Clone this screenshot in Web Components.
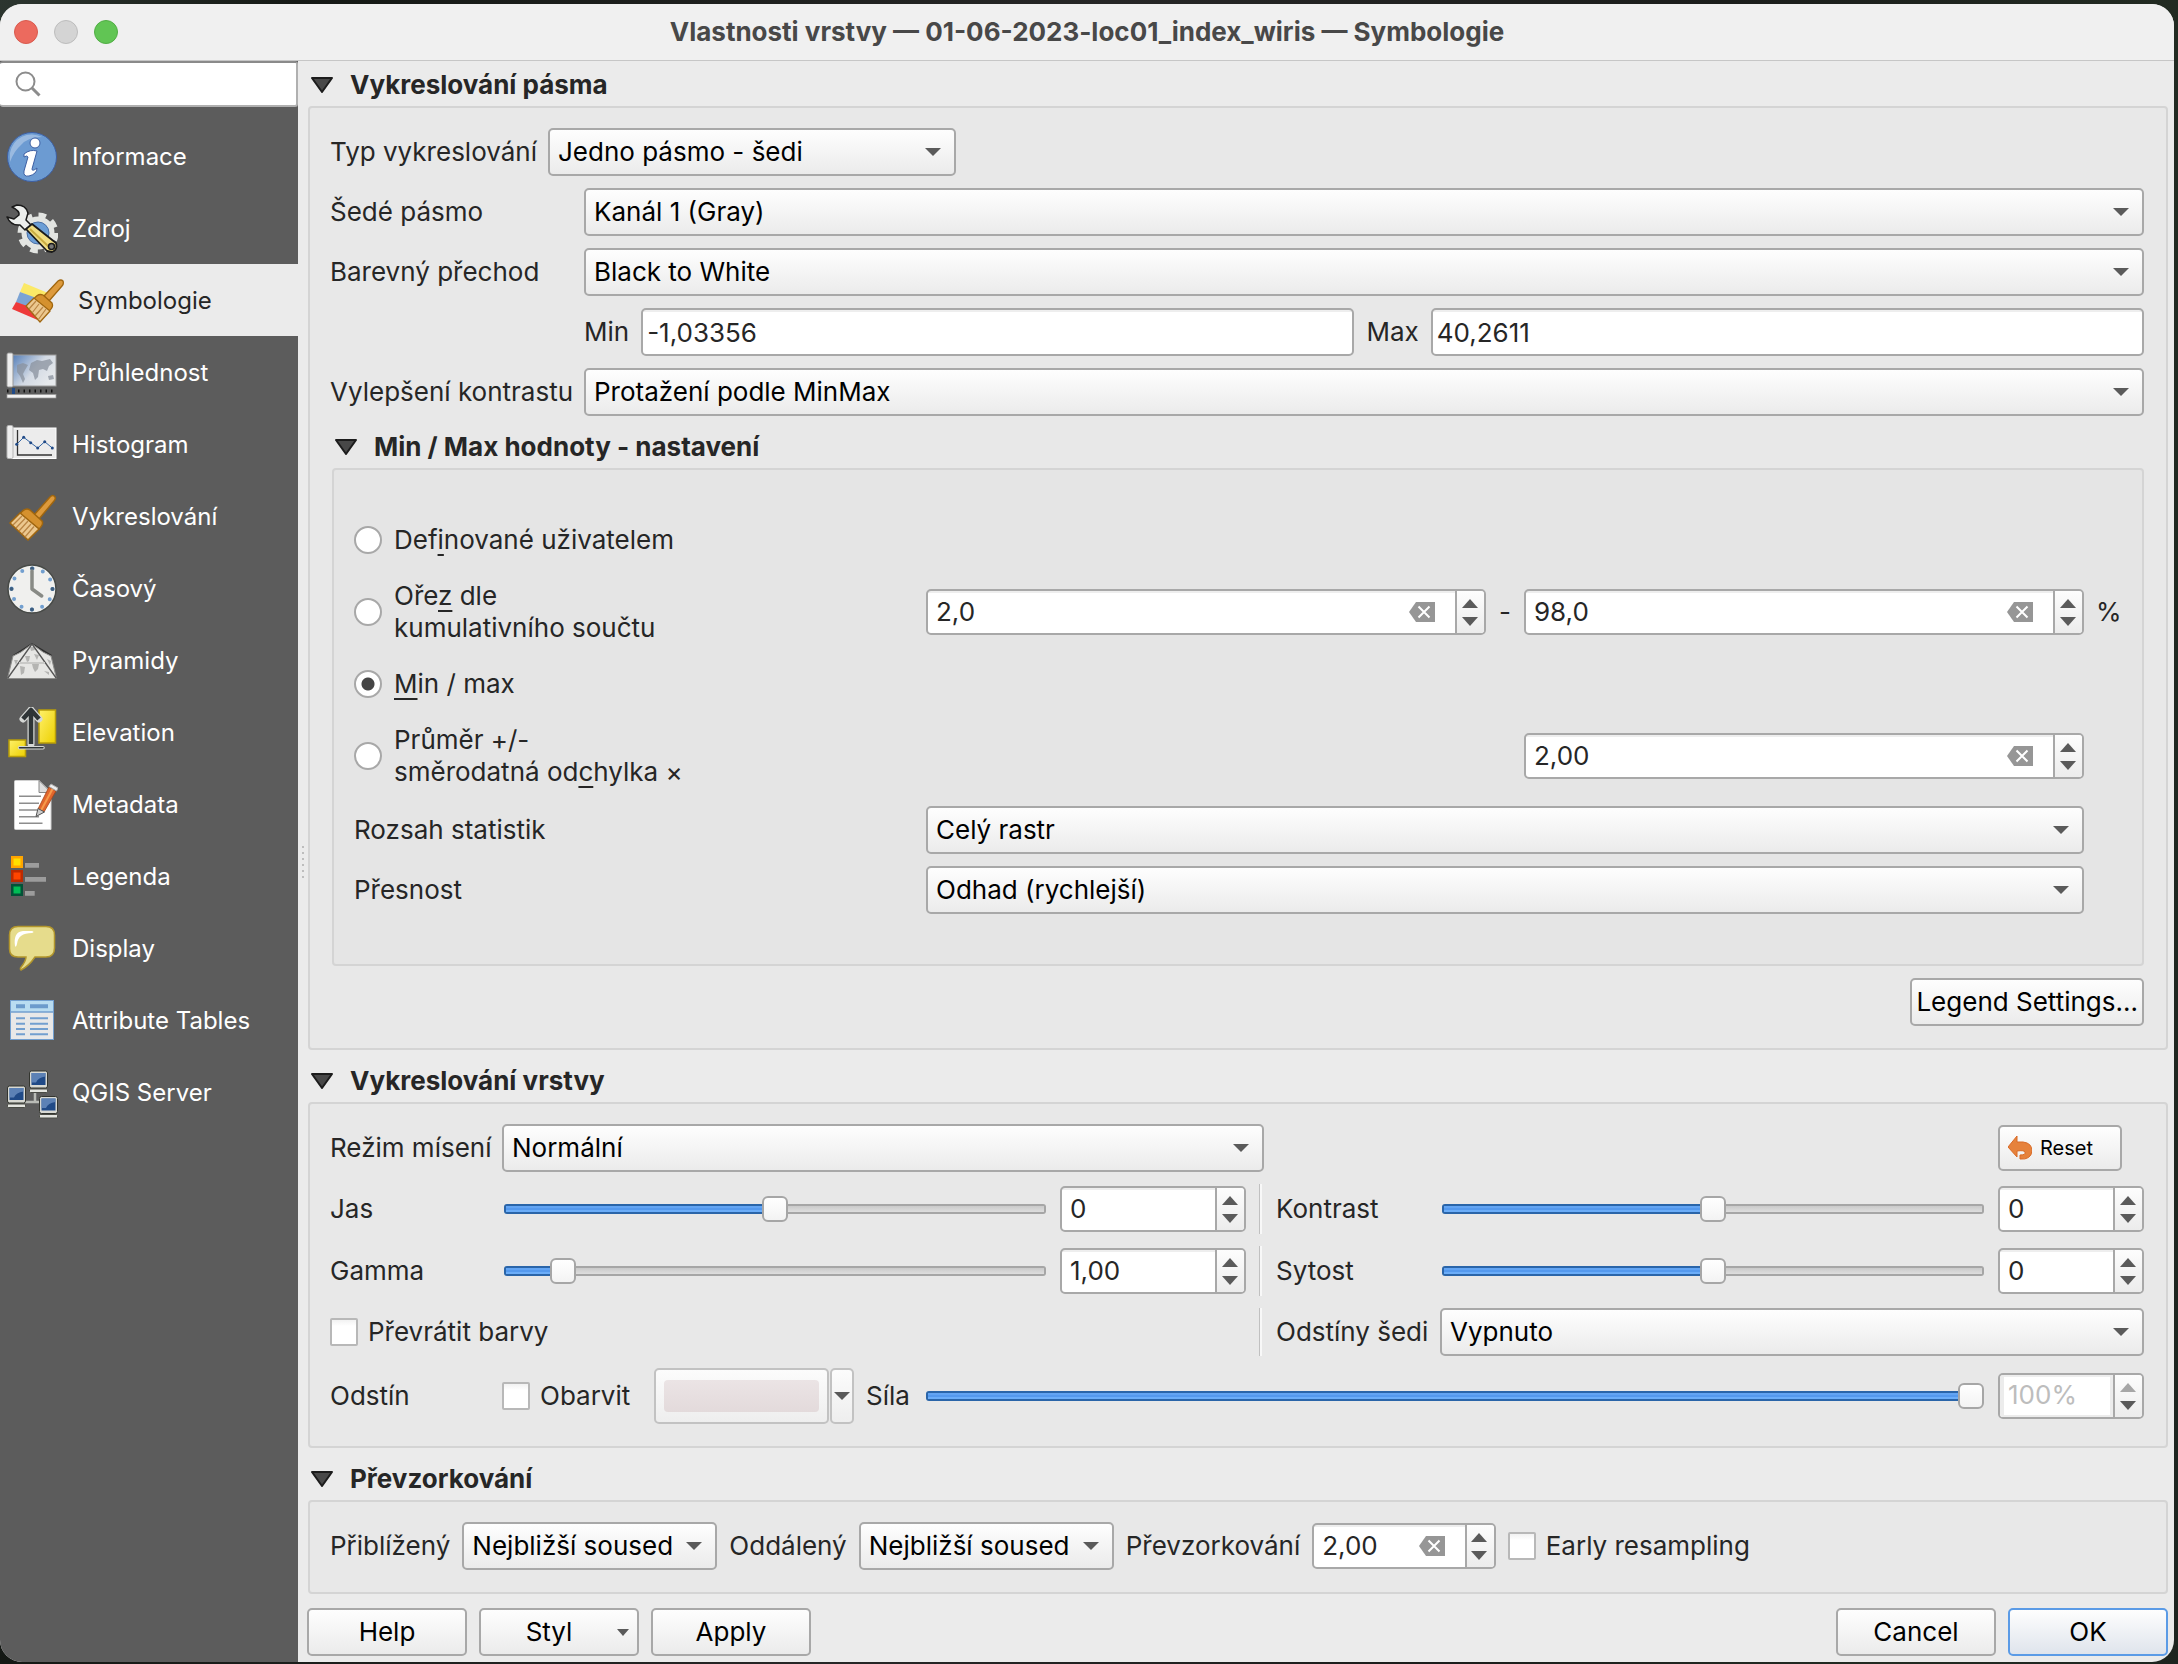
<!DOCTYPE html>
<html lang="cs">
<head>
<meta charset="utf-8">
<title>Vlastnosti vrstvy</title>
<style>
  body {
    margin: 0;
    min-height: 100vh;
    display: flex;
    background: linear-gradient(100deg, #2c352f, #151915 12%, #262626 45%, #1b1d1b 70%, #222b22 88%, #1d241f);
    font-family: Inter, "Liberation Sans", sans-serif;
    font-size: 26px;
    line-height: 32px;
    color: #262626;
  }
</style>
</head>
<body>
<layer-dialog></layer-dialog>

<script>
const base = `
  *, *::before, *::after { box-sizing: border-box; }
  input, select, button { font: inherit; color: inherit; margin: 0; }
  button, select {
    border: 2px solid #a8a8a8; border-radius: 5px;
    background: linear-gradient(#fefefe, #ebebeb); color: #000;
  }
  label, span { white-space: nowrap; }
`;

class Base extends HTMLElement {
  constructor() {
    super();
    this.attachShadow({ mode: "open" });
  }
  connectedCallback() {
    this.shadowRoot.innerHTML = `<style>${base}${this.css()}</style>${this.html()}`;
  }
  css() { return ""; }
  html() { return ""; }
  attr(name, fallback = "") { return this.getAttribute(name) ?? fallback; }
  labelHtml() {
    return this.hasAttribute("label") ? `<label for="c">${this.attr("label")}</label>` : "";
  }
  aria() {
    return this.hasAttribute("label") ? "" : `aria-label="${this.attr("name")}"`;
  }
}

const fieldCss = `
  :host { display: flex; align-items: center; min-width: 0; }
  label { flex: none; width: var(--label-width, auto); margin-right: var(--label-gap, 0px); }
`;

class UiSelect extends Base {
  css() {
    return `${fieldCss}
      .box { flex: 1; min-width: 0; display: grid; align-items: center; }
      select { grid-area: 1 / 1; width: 100%; height: 48px; padding: 0 42px 0 8px; appearance: none; }
      svg { grid-area: 1 / 1; justify-self: end; margin-right: 15px; pointer-events: none; }`;
  }
  html() {
    return `${this.labelHtml()}<div class="box">
      <select id="c" ${this.aria()}><option>${this.attr("value")}</option></select>
      <svg width="16" height="8"><path d="M0 0H16L8 8Z" fill="#5a5a5a"/></svg></div>`;
  }
}

class UiText extends Base {
  css() {
    return `${fieldCss}
      input { flex: 1 1 auto; min-width: 0; width: 200px; height: 48px; padding: 0 4px; border: 2px solid #a8a8a8;
        border-radius: 5px; background: linear-gradient(#eee 0 2px, #fff 2px); }`;
  }
  html() { return `${this.labelHtml()}<input id="c" value="${this.attr("value")}">`; }
}

const stepper = `
  <div class="steps">
    <button aria-label="Zvýšit"><svg width="16" height="9"><path d="M0 9H16L8 0Z" fill="currentColor"/></svg></button>
    <button aria-label="Snížit"><svg width="16" height="9"><path d="M0 0H16L8 9Z" fill="currentColor"/></svg></button>
  </div>`;
const spinCss = `
  .spin { display: flex; height: 46px; border: 2px solid #a8a8a8; border-radius: 5px;
    background: linear-gradient(#eee 0 2px, #fff 2px); overflow: hidden; min-width: 0; }
  .spin input { flex: 1; min-width: 0; width: 0; border: 0; padding: 0 8px; background: none; outline-offset: -2px; }
  .clear { flex: none; display: flex; align-items: center; padding: 0 20px 0 0; border: 0; background: none; }
  .steps { flex: none; width: 29px; display: flex; flex-direction: column; justify-content: center; gap: 9px; padding-right: 2px;
    border-left: 2px solid #a8a8a8; background: linear-gradient(#fdfdfd, #ececec); }
  .steps button { display: flex; justify-content: center; padding: 0; border: 0; background: none; color: #5a5a5a; }
  .dim input { color: #bdbdbd; border: solid #ececec; border-width: 0 3px 2px 4px; padding: 0 4px; }
  .dim .steps button:first-child { color: #a6a6a6; }
`;

class UiSpin extends Base {
  css() {
    return `${fieldCss}${spinCss}
      .spin { flex: 1; }`;
  }
  html() {
    const clear = this.hasAttribute("clearable") ? `<button class="clear" aria-label="Vymazat">
      <svg width="26" height="20"><path d="M0 10L7 0H26V20H7Z" fill="#969696"/><path d="M9.500 4.500L20.500 15.500M20.500 4.500L9.500 15.500" stroke="#fff" stroke-width="2"/></svg></button>` : "";
    return `${this.labelHtml()}<div class="spin">
      <input id="c" ${this.aria()} inputmode="decimal" value="${this.attr("value")}">${clear}${stepper}</div>`;
  }
}

class UiSlider extends Base {
  css() {
    return `${fieldCss}${spinCss}
      :host { gap: 14px; }
      .lead { flex: 1; display: flex; align-items: center; min-width: 0; }
      .spin { flex: none; width: var(--spin-width, 146px); }
      .range { flex: 1; min-width: 0; width: 0; height: 26px; appearance: none; background: none; }
      .range::-webkit-slider-runnable-track {
        height: 10px; border-radius: 3px;
        background:
          linear-gradient(#2a65a9, #2a65a9) left / 2px 100% no-repeat,
          linear-gradient(#2a65a9 0 2px, #62a4f3 2px 4px, #5499ee 4px 6px, #6badf8 6px 8px, #2a65a9 8px) left / var(--fill) 100% no-repeat,
          linear-gradient(#a6a6a6, #a6a6a6) right / 2px 100% no-repeat,
          linear-gradient(#a6a6a6 0 2px, #cacaca 2px, #dedede 8px, #a6a6a6 8px);
      }
      .range::-webkit-slider-thumb {
        appearance: none; width: 26px; height: 26px; margin-top: -8px;
        border: 2px solid #a6a6a6; border-radius: 6px; background: linear-gradient(#fff, #f3f3f3);
      }`;
  }
  html() {
    const pos = Number(this.attr("pos"));
    const fill = `calc(13px + (100% - 26px) * ${pos / 1000})`;
    return `<div class="lead">${this.labelHtml()}
      <input id="c" class="range" type="range" min="0" max="1000" value="${pos}" style="--fill: ${fill}"></div>
      <div class="spin ${this.hasAttribute("dim") ? "dim" : ""}">
        <input aria-label="${this.attr("label")} – hodnota" value="${this.attr("value")}">${stepper}</div>`;
  }
}

class UiCheck extends Base {
  css() {
    return `:host { display: flex; }
      label { display: flex; align-items: center; gap: 10px; }
      input { appearance: none; width: 28px; height: 28px; border: 2px solid #b8b8b8; border-radius: 2px;
        background: linear-gradient(#f2f2f2, #fff 6px); }`;
  }
  html() { return `<label><input type="checkbox"><span><slot></slot></span></label>`; }
}

class UiGroup extends Base {
  css() {
    return `:host { display: block; margin: 10px 0 0 1px; }
      h2 { margin: 0; font-size: inherit; height: 42px; }
      h2 button { display: flex; align-items: center; gap: 17px; height: 42px; padding: 0 0 0 3px; border: 0;
        background: none; font-weight: 700; color: #262626; }
      .frame { border: 2px solid #d4d4d4; border-radius: 4px; background: var(--frame, #e8e8e8);
        padding: var(--pad, 20px 22px 22px 20px); display: flex; flex-direction: column; gap: 12px; }`;
  }
  html() {
    return `<h2><button aria-expanded="true"><svg width="22" height="16"><path d="M1 1H21L11 15Z" fill="#484848" stroke="#1c1c1c" stroke-width="2" stroke-linejoin="round"/></svg>${this.attr("heading")}</button></h2>
      <div class="frame"><slot></slot></div>`;
  }
}

class MinMaxSettings extends Base {
  css() {
    return `:host { display: flex; flex-direction: column; gap: 18px; }
      .grid { display: grid; grid-template-columns: 1fr 1fr 14px 1fr 26px; gap: 12px; align-items: center; }
      .one { min-height: 56px; }
      .radio { display: flex; align-items: center; gap: 12px; }
      .wide { grid-column: 2 / 5; }
      .last { grid-column: 4; }
      .dash { text-align: center; }
      u { text-decoration-thickness: 2px; text-underline-offset: 5px; text-decoration-skip-ink: none; }
      input { appearance: none; flex: none; width: 28px; height: 28px; border: 2px solid #a8a8a8; border-radius: 50%; background: #fff; }
      input:checked { background: radial-gradient(circle, #454545 0 6px, #fff 7px); }`;
  }
  radio(id, text, extra = "") {
    return `<div class="radio ${extra}"><input type="radio" name="mode" id="${id}" ${id === "minmax" ? "checked" : ""}><label for="${id}">${text}</label></div>`;
  }
  html() {
    return `
      <div class="grid">
        ${this.radio("user", "Def<u>i</u>nované uživatelem", "one")}<i></i><i></i><i></i><i></i>
        ${this.radio("cut", "Oře<u>z</u> dle<br>kumulativního součtu")}
        <ui-spin name="Dolní mez" value="2,0" clearable></ui-spin><span class="dash">-</span>
        <ui-spin name="Horní mez" value="98,0" clearable></ui-spin><span>%</span>
        ${this.radio("minmax", "<u>M</u>in / max", "one")}<i></i><i></i><i></i><i></i>
        ${this.radio("std", "Průměr +/-<br>směrodatná od<u>c</u>hylka ×")}
        <ui-spin class="last" name="Násobek odchylky" value="2,00" clearable></ui-spin>
      </div>
      <div class="grid">
        <span>Rozsah statistik</span><ui-select class="wide" name="Rozsah statistik" value="Celý rastr"></ui-select>
        <i></i>
        <span>Přesnost</span><ui-select class="wide" name="Přesnost" value="Odhad (rychlejší)"></ui-select>
      </div>`;
  }
}

const land = `<path d="M11 18l6-2 5 2-3 5-2 4 2 5-2 4-3-7-3-4zM25 16l6-3 5 1 8-2 3 4-4 3-2 5-4-2-4 1-1 7-3 3-2-7-4-3zM42 29l5-1 1 4-5 1z"/>`;
const pc = (x, y) => `<g transform="translate(${x} ${y})"><rect x=".5" y=".5" width="18" height="17" rx="2" fill="#d8d9d3" stroke="#33352f"/><rect x="2.500" y="2.500" width="14" height="12" fill="#204a87"/><path d="M2.500 2.500H16.500V6Q9 7 7 12L2.500 12Z" fill="#6c8fc0" opacity=".8"/><rect x=".5" y="18.500" width="18" height="3.500" rx="1" fill="#e4e5e0" stroke="#4a4c46"/></g>`;
const brushParts = `
  <path d="M28 24L44 6Q47 3 49 6Q50 8 48 10L33 28Z" fill="#dd9a3c" stroke="#a0660f" stroke-width="1.500"/>
  <path d="M14 23Q19 16 24 19L36 30Q38 33 33 38Z" fill="#d5912e" stroke="#a0660f" stroke-width="1.500"/>
  <path d="M14 22L4 32L22 49L33 38Z" fill="#ecc88f" stroke="#a0660f" stroke-width="1.500"/>
  <path d="M16 25L7 34M19 27.500L10 37M22 30L13 40M25 33L16 43M28 35.500L19 46" stroke="#b98545" stroke-width="1.300"/>`;
const icons = {
  info: `<circle cx="26" cy="26" r="24.500" fill="#6c9bd2" stroke="#3d5fa3"/><path d="M4 22A22 22 0 0 1 36 6Q22 6 15 14Q8 20 4 31Z" fill="#a9c4e4" opacity=".75"/><circle cx="29" cy="12" r="5" fill="#fff" stroke="#3d5fa3"/><path d="M18 23Q24 18 31 20L26 38Q26 41 31 37Q31 43 23 45Q17 46 18 40L22 26Q21 24 18 26Z" fill="#fff" stroke="#3d5fa3"/>`,
  source: `<g transform="translate(32 30)"><circle r="13" fill="none" stroke="#e3e5e2" stroke-width="7"/><circle r="17.500" fill="none" stroke="#e3e5e2" stroke-width="6" stroke-dasharray="7.400 6.340"/><circle r="11" fill="#6d9fd6" stroke="#4a6fa5"/></g>
    <path d="M11 2Q20 2 22 10L20 17L25 22L19 27L14 22Q5 23 1 14L8 16L13 12Q14 8 6 4Z" fill="#eceeec" stroke="#1a1a1a" stroke-width="1.500" stroke-linejoin="round"/>
    <path d="M20 26L26 21L50 40Q52 47 46 49L41 48Z" fill="#f0dd83" stroke="#1a1a1a" stroke-width="1.800" stroke-linejoin="round"/><path d="M24 26L43 44" stroke="#c9ac41" stroke-width="2"/><circle cx="45.500" cy="43.500" r="3" fill="#777" stroke="#1a1a1a" stroke-width="1.500"/>`,
  symbology: `<path d="M12 8L36 18L28 26L8 17Z" fill="#fbe967"/><path d="M8 17L30 25L20 38L4 27Z" fill="#7ba3d4"/><path d="M4 27L24 34L28 46L0 34Z" fill="#ee3a3a"/>
    <path d="M32 21L46 6Q49 4 51 6Q52 9 50 11L37 26Z" fill="#dd9a3c" stroke="#a0660f" stroke-width="1.300"/><path d="M22 24Q26 18 31 20L40 28Q42 32 37 36Z" fill="#d5912e" stroke="#a0660f" stroke-width="1.300"/><path d="M22 23L14 31L28 47L38 36Z" fill="#ecc88f" stroke="#a0660f" stroke-width="1.300"/><path d="M24 26L17 34M27 29L20 38M31 32L23 41M34 34L26 45" stroke="#b98545" stroke-width="1.200"/>`,
  transparency: `<defs><linearGradient id="g" x2="1" y2=".6"><stop stop-color="#4f7ab6"/><stop offset=".6" stop-color="#d3dae4"/><stop offset="1" stop-color="#e6e9ec"/></linearGradient></defs><rect x="5" y="8" width="45" height="31" fill="url(#g)" stroke="#9c9c9c"/><g fill="#8a929e" opacity=".75">${land}</g><rect x="1" y="6" width="6" height="34" rx="1.500" fill="#eee" stroke="#999"/><path d="M1 44H50" stroke="#111" stroke-width="3" stroke-dasharray="1.500 4"/><rect x="6" y="41" width="3" height="6" fill="#204a87"/><rect x="1" y="47.500" width="49" height="3.500" fill="#f2f2f2" stroke="#999" stroke-width=".7"/>`,
  histogram: `<rect x="5" y="9" width="45" height="30.500" fill="#ececec" stroke="#fff"/><rect x="1" y="6.500" width="6" height="33" rx="1.500" fill="#eee" stroke="#b5b5b5"/><path d="M11.500 11V36H46" fill="none" stroke="#333" stroke-width="1.300"/><path d="M10.700 25.300L17.700 18.300L24.700 23.700L31.700 29L38.700 22.700L46.300 29" fill="none" stroke="#3465a4"/><g fill="#204a87"><circle cx="10.700" cy="25.300" r="1.500"/><circle cx="17.700" cy="18.300" r="1.500"/><circle cx="24.700" cy="23.700" r="1.500"/><circle cx="31.700" cy="29" r="1.500"/><circle cx="38.700" cy="22.700" r="1.500"/><circle cx="46.300" cy="29" r="1.500"/></g>`,
  rendering: brushParts,
  temporal: `<circle cx="26" cy="26" r="24" fill="#f0f0ee" stroke="#474a47" stroke-width="1.500"/><circle cx="26" cy="26" r="20.500" fill="none" stroke="#729fcf" stroke-width="4" stroke-linecap="round" stroke-dasharray="0 10.733"/><g fill="#3d5e80"><circle cx="26" cy="5.500" r="2"/><circle cx="26" cy="46.500" r="2"/><circle cx="5.500" cy="26" r="2"/><circle cx="46.500" cy="26" r="2"/></g><path d="M26 8V26L35.700 33" fill="none" stroke="#888a85" stroke-width="3.500" stroke-linecap="round" stroke-linejoin="round"/>`,
  pyramids: `<path d="M7 20L26 8L46 20L38 24L26 16L12 24Z" fill="#2e2e2e"/><path d="M1.500 43.500L7 21L15 17L26 9L37 17L45 21L50.500 43.500Z" fill="#e6e6e4" stroke="#8d8d8b"/><g fill="#b4b4b2"><path d="M14 31l5 1-1 6-3 2zM26 29l7 0-1 5-3 3-2-4zM38 36l5 1v3zM19 21l5 0-1 5-2 1zM28 19l5 1-2 5zM24 12l4 0 1 3-4 1zM8 25l4 0-2 5zM41 24l4 2-1 4z"/></g><path d="M26 9L1.500 43.500M26 9L50.500 43.500" stroke="#555" stroke-width="1.300"/><path d="M13 28H39" stroke="#c9c9c7" stroke-width="2"/>`,
  elevation: `<defs><linearGradient id="y" x2="1" y2="1"><stop stop-color="#fff06a"/><stop offset="1" stop-color="#ecd000"/></linearGradient></defs><rect x="33" y="3" width="16.500" height="33" fill="url(#y)" stroke="#b89d09" stroke-width="1.500"/><rect x="3" y="33" width="16.500" height="16.500" fill="url(#y)" stroke="#b89d09" stroke-width="1.500"/><g fill="none" stroke-linecap="round" stroke-linejoin="round"><path d="M25 37V3M17 12L25 3L33 12" stroke="#d5d7d5" stroke-width="7"/><path d="M13.500 40.800H37" stroke="#d5d7d5" stroke-width="3.500"/><path d="M25 37V3M17 12L25 3L33 12" stroke="#2e3436" stroke-width="4.500" stroke-linecap="butt"/><path d="M13.500 40.800H37" stroke="#2e3436" stroke-width="1.500"/></g>`,
  metadata: `<path d="M8.500 2.500Q8.500 1.500 9.500 1.500H33L45 13V50.500H9.500Q8.500 50.500 8.500 49.500Z" fill="#fff" stroke="#d0d0d0"/><path d="M33 1.500V13.500H45Z" fill="#ddd" stroke="#888"/><path d="M13 17.300H35M13 24.300H33M13 31H31M13 37.700H33M13 44.300H36.500" stroke="#8d8d8d" stroke-width="1.600"/><path d="M43 8L50 12L38 33L32 30Z" fill="#e1662d" stroke="#a34417" stroke-width=".8"/><path d="M46.500 10L35 31.500" stroke="#f79a4b" stroke-width="2"/><path d="M32 29.500L38.500 33L30 37.500Z" fill="#ccc" stroke="#555" stroke-width="1"/><path d="M43 7.500L45 5L52 9L50.500 12Z" fill="#eee" stroke="#aaa"/>`,
  legend: `<g stroke-width="2.500"><rect x="6.250" y="6.250" width="9.500" height="9.500" fill="#ffe000" stroke="#ffa500"/><rect x="6.250" y="20.250" width="9.500" height="9.500" fill="#ff4500" stroke="#bd2a00"/><rect x="6.250" y="34.250" width="9.500" height="9.500" fill="#00bd55" stroke="#035137"/></g><path d="M19 14.300H33M19 28.300H40M19 42.300H28.700" stroke="#9c9c9c" stroke-width="4.700"/>`,
  display: `<path d="M12 3.500H40Q48.500 3.500 48.500 12V25Q48.500 34 40 34H29Q23 43 15 47Q14 46 14.500 45Q20 38 20 34H12Q3.500 34 3.500 26V12Q3.500 3.500 12 3.500Z" fill="#e6dc8c" stroke="#b2962c" stroke-width="1.500"/><path d="M9 23Q7 9 17 8H26Q29 9 26 10Q12 10 11 21Q10 25 9 23Z" fill="#fff"/>`,
  tables: `<rect x="4.500" y="5.500" width="43" height="39" fill="#e8e8e8" stroke="#729fcf"/><rect x="5" y="6" width="42" height="11" fill="#b9dcf1"/><path d="M4.500 17H47.500" stroke="#729fcf" stroke-width="1.300"/><path d="M10 11.300H19M24 11.300H42" stroke="#6c9bcc" stroke-width="4"/><path d="M10 23.300H19M24 23.300H42M10 28.700H19M24 28.700H42M10 34H19M24 34H42M10 39.300H19M24 39.300H42" stroke="#729fcf" stroke-width="2"/>`,
  server: `<path d="M29 26V35M19 35H34" stroke="#b9bbb6" stroke-width="2.500"/>${pc(23, 3.5)}${pc(1, 18.5)}${pc(33, 29)}`
};

class SideItem extends Base {
  css() {
    return `:host { display: block; color: #fff; }
      a { display: flex; align-items: center; gap: 14px; height: 72px; padding: 2px 0 0 6px; color: inherit; text-decoration: none; font-size: 24px; }
      :host([selected]) a { background: #ebebeb; color: #262626; padding-left: 12px; }
      svg { flex: none; }`;
  }
  html() {
    return `<a href="#${this.attr("icon")}" ${this.hasAttribute("selected") ? 'aria-current="page"' : ""}>
      <svg width="52" height="52" viewBox="0 0 52 52">${icons[this.attr("icon")]}</svg><span><slot></slot></span></a>`;
  }
}

class SideBar extends Base {
  css() {
    return `:host { display: block; width: 298px; background: #5c5c5c; }
      .search { display: flex; align-items: center; gap: 8px; height: 46px; padding-left: 14px; margin-bottom: 13px;
        background: #fff; border: 2px solid #b0b0b0; border-top-color: #8a8a8a; border-left-width: 0; border-radius: 3px; }
      .search input { flex: 1; min-width: 0; border: 0; background: none; }
      .search svg { flex: none; }`;
  }
  html() {
    const items = [["info", "Informace"], ["source", "Zdroj"], ["symbology", "Symbologie"], ["transparency", "Průhlednost"],
      ["histogram", "Histogram"], ["rendering", "Vykreslování"], ["temporal", "Časový"], ["pyramids", "Pyramidy"],
      ["elevation", "Elevation"], ["metadata", "Metadata"], ["legend", "Legenda"], ["display", "Display"],
      ["tables", "Attribute Tables"], ["server", "QGIS Server"]];
    return `<div class="search"><svg width="28" height="28"><circle cx="11.500" cy="11.500" r="9" fill="none" stroke="#8c8c8c" stroke-width="2"/><path d="M18 18L25.500 25.500" stroke="#8c8c8c" stroke-width="3"/></svg><input type="search" aria-label="Hledat"></div>
      <nav>${items.map(([i, t]) => `<side-item icon="${i}"${i === "symbology" ? " selected" : ""}>${t}</side-item>`).join("")}</nav>`;
  }
}

class ColorButton extends Base {
  css() {
    return `:host { display: flex; height: 56px; gap: 1px; }
      button { border-color: #c2c2c2; background: linear-gradient(#fcfcfc, #eeeeee); display: flex; align-items: center; justify-content: center; padding: 0; }
      .color { width: 175px; padding: 8px; }
      .color span { flex: 1; height: 32px; border-radius: 4px; background: linear-gradient(#ebe4e5, #e3dadb); }
      .more { width: 24px; }`;
  }
  html() {
    return `<button class="color" aria-label="Barva"><span></span></button>
      <button class="more" aria-label="Možnosti barvy"><svg width="16" height="8"><path d="M0 0H16L8 8Z" fill="#5a5a5a"/></svg></button>`;
  }
}

class LayerDialog extends Base {
  css() {
    return `:host { flex: 1; min-width: 0; margin: 4px 4px 2px 0; display: flex; flex-direction: column;
        background: #ebebeb; border-radius: 22px; overflow: hidden; }
      header { display: flex; align-items: center; height: 57px; padding: 0 14px; background: #f0f0f0; border-bottom: 1px solid #c6c6c6; }
      .lights { flex: 1; display: flex; gap: 16px; }
      .lights button { width: 24px; height: 24px; padding: 0; border: 1px solid #d85a4e; border-radius: 50%; background: #ec6a5e; }
      .lights button:nth-child(2) { background: #d4d4d4; border-color: #bcbcbc; }
      .lights button:nth-child(3) { background: #61c554; border-color: #51ad45; }
      h1 { margin: 0; font-size: 26px; line-height: 32px; font-weight: 700; color: #484848; }
      .end { flex: 1; }
      .body { flex: 1; display: flex; min-height: 0; }
      .split { width: 9px; display: flex; flex-direction: column; align-items: center; justify-content: center; gap: 4px; }
      .split i { width: 2px; height: 2px; background: #bdbdbd; }
      main { flex: 1; min-width: 0; padding: 3px 6px 6px 0; display: flex; flex-direction: column; }
      main > ui-group:first-child { margin-top: 0; }
      .row { display: flex; align-items: center; gap: 12px; }
      .half { gap: 13px; min-height: 50px; }
      .short { min-height: 48px; }
      .left { flex: 1 1 372px; --label-width: 174px; --spin-width: 186px; }
      .right { flex: 1 1 324px; --label-width: 166px; }
      ui-select.right { --label-width: 164px; }
      .sep { flex: none; align-self: stretch; width: 4px; border-left: 1px solid #c0c0c0; box-shadow: inset 2px 0 #f8f8f8; }
      .wide-label { --label-width: 254px; }
      .indent { margin-left: 254px; }
      .indent ui-text { flex: 1 1 auto; --label-gap: 12px; }
      .inner { margin: -2px 0 0 2px; --frame: #e5e5e5; --pad: 42px 20px 50px 20px; }
      .type { --label-width: 218px; width: 626px; }
      .blend { flex: 1 1 390px; --label-width: 172px; }
      .reset-cell { flex: 1 1 324px; display: flex; justify-content: flex-end; padding-right: 22px; }
      .reset { display: flex; align-items: center; gap: 8px; width: 124px; height: 46px; padding: 0 8px; font-size: 20px; }
      .legend { align-self: flex-end; height: 48px; padding: 0 4px; }
      .hue { width: 160px; }
      .colorize { width: 140px; }
      .strength { flex: 1; --label-width: 60px; }
      .resample { --label-gap: 12px; }
      .resample ui-select { flex: none; }
      .resample ui-spin { flex: none; }
      footer { display: flex; gap: 12px; margin-top: auto; padding-top: 12px; }
      footer button { width: 160px; height: 48px; padding: 0; }
      .style { display: flex; align-items: center; padding-right: 8px; }
      .style span { flex: 1; text-align: center; }
      .gap { flex: 1; }
      .ok { border-color: #5b9be6; background: linear-gradient(#fefefe, #dfe4ec); }`;
  }
  html() {
    return `
      <header>
        <div class="lights"><button aria-label="Zavřít"></button><button aria-label="Minimalizovat"></button><button aria-label="Maximalizovat"></button></div>
        <h1>Vlastnosti vrstvy — 01-06-2023-loc01_index_wiris — Symbologie</h1>
        <div class="end"></div>
      </header>
      <div class="body">
        <side-bar></side-bar>
        <div class="split"><i></i><i></i><i></i><i></i><i></i><i></i></div>
        <main>
          <ui-group heading="Vykreslování pásma">
            <ui-select class="type" label="Typ vykreslování" value="Jedno pásmo - šedi"></ui-select>
            <ui-select class="wide-label" label="Šedé pásmo" value="Kanál 1 (Gray)"></ui-select>
            <ui-select class="wide-label" label="Barevný přechod" value="Black to White"></ui-select>
            <div class="row indent">
              <ui-text label="Min" value="-1,03356"></ui-text>
              <ui-text label="Max" value="40,2611"></ui-text>
            </div>
            <ui-select class="wide-label" label="Vylepšení kontrastu" value="Protažení podle MinMax"></ui-select>
            <ui-group class="inner" heading="Min / Max hodnoty - nastavení">
              <min-max-settings></min-max-settings>
            </ui-group>
            <button class="legend">Legend Settings...</button>
          </ui-group>
          <ui-group heading="Vykreslování vrstvy">
            <div class="row">
              <ui-select class="blend" label="Režim mísení" value="Normální"></ui-select>
              <div class="reset-cell"><button class="reset"><svg width="24" height="24"><path d="M0 11L9 0V6H15Q24 7 24 15Q23 24 12 23V19Q18 19 17 16Q16 14 9 15V21Z" fill="#e6823c" stroke="#d96a26"/></svg>Reset</button></div>
            </div>
            <div class="row half">
              <ui-slider class="left" label="Jas" pos="500" value="0"></ui-slider><div class="sep"></div>
              <ui-slider class="right" label="Kontrast" pos="500" value="0"></ui-slider>
            </div>
            <div class="row half">
              <ui-slider class="left" label="Gamma" pos="90" value="1,00"></ui-slider><div class="sep"></div>
              <ui-slider class="right" label="Sytost" pos="500" value="0"></ui-slider>
            </div>
            <div class="row half short">
              <ui-check class="left">Převrátit barvy</ui-check><div class="sep"></div>
              <ui-select class="right" label="Odstíny šedi" value="Vypnuto"></ui-select>
            </div>
            <div class="row">
              <span class="hue">Odstín</span>
              <ui-check class="colorize">Obarvit</ui-check>
              <color-button></color-button>
              <ui-slider class="strength" label="Síla" pos="1000" value="100%" dim></ui-slider>
            </div>
          </ui-group>
          <ui-group heading="Převzorkování">
            <div class="row resample">
              <ui-select label="Přiblížený" value="Nejbližší soused"></ui-select>
              <ui-select label="Oddálený" value="Nejbližší soused"></ui-select>
              <ui-spin label="Převzorkování" value="2,00" clearable style="width: 370px"></ui-spin>
              <ui-check>Early resampling</ui-check>
            </div>
          </ui-group>
          <footer>
            <button>Help</button>
            <button class="style"><span>Styl</span><svg width="12" height="7"><path d="M0 0H12L6 7Z" fill="#5a5a5a"/></svg></button>
            <button>Apply</button>
            <div class="gap"></div>
            <button>Cancel</button>
            <button class="ok">OK</button>
          </footer>
        </main>
      </div>`;
  }
}

customElements.define("ui-select", UiSelect);
customElements.define("ui-text", UiText);
customElements.define("ui-spin", UiSpin);
customElements.define("ui-slider", UiSlider);
customElements.define("ui-check", UiCheck);
customElements.define("ui-group", UiGroup);
customElements.define("min-max-settings", MinMaxSettings);
customElements.define("side-item", SideItem);
customElements.define("side-bar", SideBar);
customElements.define("color-button", ColorButton);
customElements.define("layer-dialog", LayerDialog);
</script>
</body>
</html>
